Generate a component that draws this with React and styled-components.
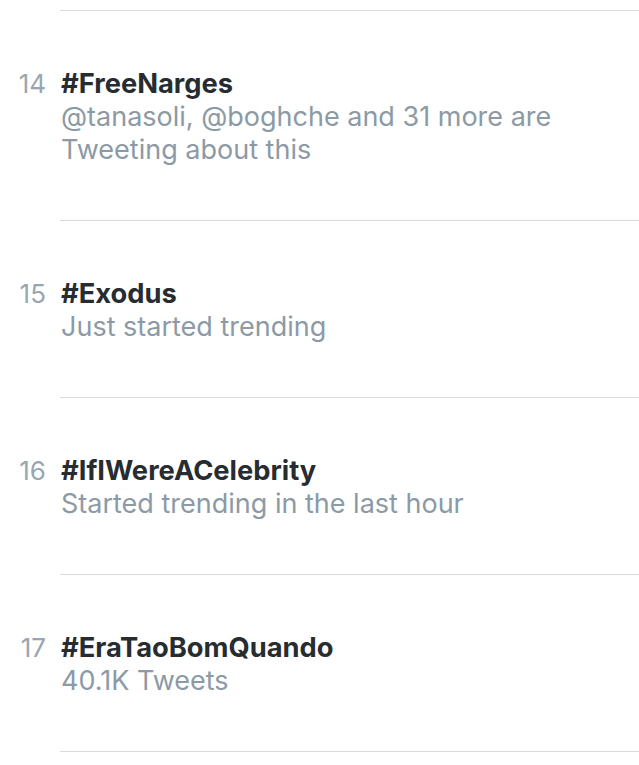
import React from "react"
import styled, { createGlobalStyle } from "styled-components"

const GlobalStyle = createGlobalStyle`
  html, body {
    margin: 0;
    padding: 0;
    background: #fff;
  }
  body {
    font-family: Inter, "Liberation Sans", sans-serif;
    -webkit-font-smoothing: antialiased;
  }
`

const List = styled.div`
  width: 639px;
  padding-top: 10px;
`

const Divider = styled.div`
  height: 1px;
  margin-left: 60px;
  background: #d6dbdf;
`

const Row = styled.div`
  display: flex;
  align-items: flex-start;
  padding: 56px 0 54px 0;
`

const Rank = styled.div`
  width: 46px;
  flex-shrink: 0;
  text-align: right;
  font-size: 26px;
  line-height: 33px;
  color: #99a6b0;
`

const Body = styled.div`
  margin-left: 15px;
  display: flex;
  flex-direction: column;
`

const Tag = styled.div`
  font-size: 27.3px;
  font-weight: 700;
  line-height: 33px;
  color: #272c31;
`

const Meta = styled.div`
  font-size: 27px;
  line-height: 33px;
  color: #8c9aa5;
  max-width: 560px;
`

const trends = [
  { rank: 14, tag: "#FreeNarges", meta: ["@tanasoli, @boghche and 31 more are", "Tweeting about this"] },
  { rank: 15, tag: "#Exodus", meta: ["Just started trending"] },
  { rank: 16, tag: "#IfIWereACelebrity", meta: ["Started trending in the last hour"] },
  { rank: 17, tag: "#EraTaoBomQuando", meta: ["40.1K Tweets"] },
]

export default function App() {
  return (
    <>
      <GlobalStyle />
      <List>
        <Divider />
        {trends.map(item => (
          <React.Fragment key={item.rank}>
            <Row>
              <Rank>{item.rank}</Rank>
              <Body>
                <Tag>{item.tag}</Tag>
                {item.meta.map(line => (
                  <Meta key={line}>{line}</Meta>
                ))}
              </Body>
            </Row>
            <Divider />
          </React.Fragment>
        ))}
      </List>
    </>
  )
}
